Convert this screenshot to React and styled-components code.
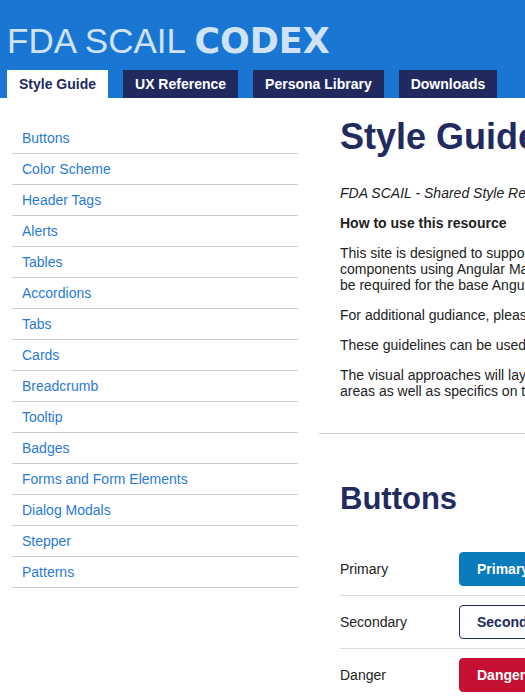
import React from "react";
import styled, { createGlobalStyle } from "styled-components";

const GlobalStyle = createGlobalStyle`
  html, body {
    margin: 0;
    padding: 0;
    overflow-x: hidden;
    background: #fff;
  }
  body {
    font-family: "Liberation Sans", Arial, sans-serif;
    font-size: 14px;
    color: #222;
  }
`;

const Header = styled.header`
  background-color: #1976d2;
  height: 98px;
  padding: 21px 0 0 7px;
  box-sizing: border-box;
  display: flex;
  flex-direction: column;
  gap: 9px;
`;

const Title = styled.h1`
  margin: 0;
  font-size: 35px;
  line-height: 40px;
  font-weight: normal;
  color: #cfe2f6;
  white-space: nowrap;

  & b {
    font-family: "DejaVu Sans", sans-serif;
    font-weight: bold;
  }
`;

const Tabs = styled.nav`
  display: flex;
  gap: 15px;
`;

const Tab = styled.a`
  display: block;
  height: 28px;
  box-sizing: border-box;
  padding: 6px 12px;
  line-height: 16px;
  font-size: 14px;
  font-weight: bold;
  white-space: nowrap;
  text-decoration: none;
  background-color: ${({ $active }) => ($active ? "#fff" : "#212a5f")};
  color: ${({ $active }) => ($active ? "#212a5f" : "#fff")};
`;

const Layout = styled.div`
  display: grid;
  grid-template-columns: 286px 700px;
  gap: 21px;
  padding-left: 12px;
  width: 1100px;
`;

const SideNav = styled.ul`
  list-style: none;
  margin: 25px 0 0;
  padding: 0;
`;

const SideItem = styled.li`
  border-bottom: 1px solid #cccccc;

  & a {
    display: block;
    padding: 7px 10px;
    line-height: 16px;
    font-size: 14px;
    color: #2a7ad5;
    text-decoration: none;
  }
`;

const Main = styled.main`
  padding-top: 19px;
`;

const Section = styled.section`
  padding: 0 0 0 21px;
`;

const PageTitle = styled.h1`
  margin: 0 0 28px;
  font-size: 36px;
  line-height: 40px;
  font-weight: bold;
  color: #222b5f;
`;

const Para = styled.p`
  margin: 0 0 14px;
  line-height: 16px;
  white-space: nowrap;
  font-style: ${({ $italic }) => ($italic ? "italic" : "normal")};
  font-weight: ${({ $bold }) => ($bold ? "bold" : "normal")};
`;

const Divider = styled.hr`
  border: none;
  border-top: 1px solid #cccccc;
  margin: 34px 0 48px;
`;

const SectionTitle = styled.h2`
  margin: 0 0 27px;
  font-size: 31px;
  line-height: 34px;
  font-weight: bold;
  color: #222b5f;
`;

const DemoRow = styled.div`
  display: grid;
  grid-template-columns: 119px auto;
  align-items: center;
  padding: 9px 0;
  border-bottom: ${({ $last }) => ($last ? "none" : "1px solid #dddddd")};
`;

const RowLabel = styled.span`
  font-size: 14px;
  line-height: 16px;
  color: #222;
`;

const variants = {
  primary: { bg: "#0a7bbd", border: "#0a7bbd", color: "#fff" },
  secondary: { bg: "#fff", border: "#222b5f", color: "#222b5f" },
  danger: { bg: "#c50f33", border: "#c50f33", color: "#fff" },
};

const Button = styled.button`
  justify-self: start;
  height: 34px;
  padding: 0 17px;
  min-width: 130px;
  text-align: left;
  border-radius: 4px;
  font-family: "Liberation Sans", Arial, sans-serif;
  font-size: 14px;
  font-weight: bold;
  cursor: pointer;
  background-color: ${({ $variant }) => variants[$variant].bg};
  border: 1px solid ${({ $variant }) => variants[$variant].border};
  color: ${({ $variant }) => variants[$variant].color};
`;

const navLinks = [
  "Buttons",
  "Color Scheme",
  "Header Tags",
  "Alerts",
  "Tables",
  "Accordions",
  "Tabs",
  "Cards",
  "Breadcrumb",
  "Tooltip",
  "Badges",
  "Forms and Form Elements",
  "Dialog Modals",
  "Stepper",
  "Patterns",
];

const tabs = ["Style Guide", "UX Reference", "Persona Library", "Downloads"];

const buttons = [
  { label: "Primary", variant: "primary" },
  { label: "Secondary", variant: "secondary" },
  { label: "Danger", variant: "danger" },
];

export default function App() {
  return (
    <>
      <GlobalStyle />
      <Header>
        <Title>
          FDA SCAIL <b>CODEX</b>
        </Title>
        <Tabs>
          {tabs.map((t, i) => (
            <Tab key={t} href="#" $active={i === 0}>
              {t}
            </Tab>
          ))}
        </Tabs>
      </Header>
      <Layout>
        <SideNav>
          {navLinks.map((l) => (
            <SideItem key={l}>
              <a href="#">{l}</a>
            </SideItem>
          ))}
        </SideNav>
        <Main>
          <Section>
            <PageTitle>Style Guide</PageTitle>
            <Para $italic>FDA SCAIL - Shared Style Resource for Angular Material</Para>
            <Para $bold>How to use this resource</Para>
            <Para>
              This site is designed to support the development of consistent user interfaces and
              <br />
              components using Angular Material. It documents the custom styling that may
              <br />
              be required for the base Angular Material components.
            </Para>
            <Para>For additional gudiance, please contact the UX team.</Para>
            <Para>These guidelines can be used by designers and developers alike.</Para>
            <Para>
              The visual approaches will lay out the general look and feel of the application
              <br />
              areas as well as specifics on the individual components.
            </Para>
          </Section>
          <Divider />
          <Section>
            <SectionTitle>Buttons</SectionTitle>
            {buttons.map((b, i) => (
              <DemoRow key={b.label} $last={i === buttons.length - 1}>
                <RowLabel>{b.label}</RowLabel>
                <Button $variant={b.variant}>{b.label}</Button>
              </DemoRow>
            ))}
          </Section>
        </Main>
      </Layout>
    </>
  );
}
